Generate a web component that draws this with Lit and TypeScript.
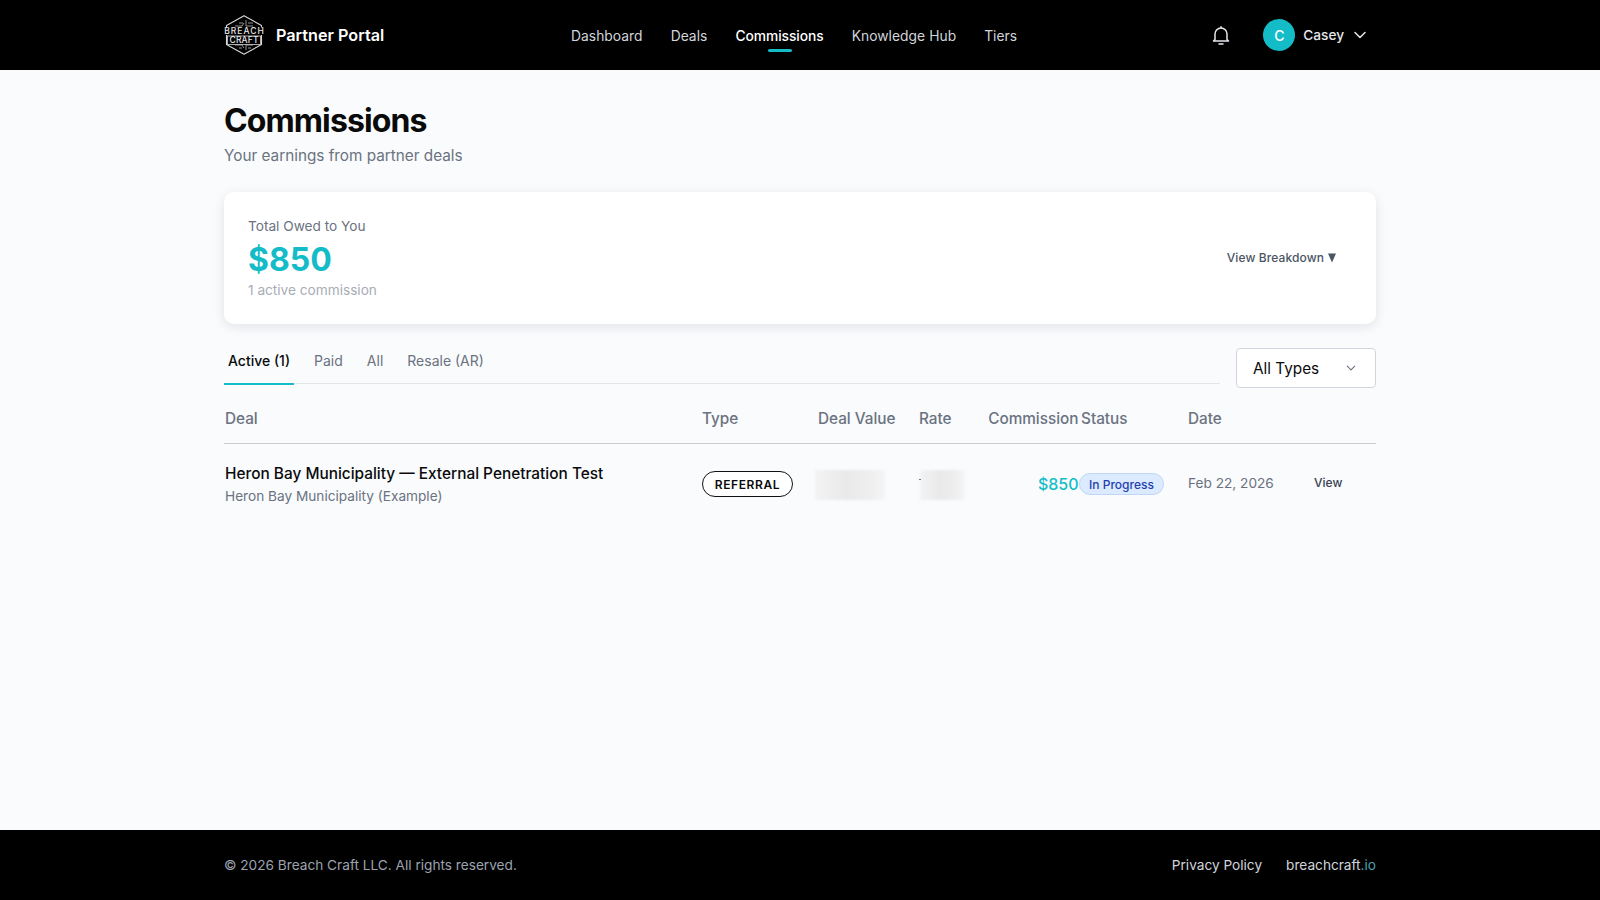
import { LitElement, html, css, svg } from "lit";
import { customElement } from "lit/decorators.js";

const logo = svg`<svg class="logo" viewBox="0 0 40 40" width="40" height="40" fill="none" aria-label="Breach Craft">
  <path d="M20 .8 L37.500 10.500 V29.500 L20 39.200 L2.500 29.500 V10.500 Z" stroke="#d8d8d8" stroke-width="1.100" stroke-linejoin="round"/>
  <path d="M11 11 H18 L20 8 M29 11 H22 V5 M15 8 H19 M24 8 H29 M11 30 H18 L20 33 M29 30 H22 V35 M15 33 H18 M24 33 H27" stroke="#b8b8b8" stroke-width=".8"/>
  <rect x="0" y="12.500" width="40" height="7.500" fill="#000"/>
  <rect x="3.500" y="21" width="33" height="8.500" fill="#000" stroke="#d8d8d8" stroke-width=".8"/>
  <text x="20" y="19.200" text-anchor="middle" textLength="39.500" lengthAdjust="spacing" class="lt">BREACH</text>
  <text x="20" y="28.200" text-anchor="middle" textLength="29" lengthAdjust="spacing" class="lt">CRAFT</text>
</svg>`;

const bell = svg`<svg viewBox="0 0 24 24" width="24" height="24" fill="none" stroke="#e5e7eb" stroke-width="1.500" stroke-linecap="round" stroke-linejoin="round"><path d="M18 16.500V11a6 6 0 0 0-12 0v5.500L4.500 18h15z"/><path d="M10 21h4"/><path d="M12 5V3.800"/></svg>`;

const chevron = (c: string, w: number) => svg`<svg viewBox="0 0 16 16" width="${w}" height="${w}" fill="none" stroke="${c}" stroke-width="1.500" stroke-linecap="round" stroke-linejoin="round"><path d="M3 5.500 8 10.500 13 5.500"/></svg>`;

const tri = svg`<svg class="tri" viewBox="0 0 8 10" width="8" height="10"><path d="M0 .5H8L4 9.500Z" fill="#4b5563"/></svg>`;

@customElement("app-root")
export class AppRoot extends LitElement {
  static styles = css`
    :host { display: flex; flex-direction: column; min-height: 900px; background: #f9fbfd; font-family: Inter, "Liberation Sans", sans-serif; color: #0a0a0a; }
    * { box-sizing: border-box; }
    .bar { background: #000; height: 70px; flex: none; }
    .wrap { width: 1152px; margin: 0 auto; }
    .bar .wrap { height: 100%; display: flex; align-items: center; }
    .brand { display: flex; align-items: center; gap: 12px; width: 347px; flex: none; color: #fff; font-size: 16.200px; font-weight: 600; }
    .logo { display: block; }
    .lt { font-family: Inter, sans-serif; font-size: 8.500px; font-weight: 500; fill: #e6e6e6; }
    nav { display: flex; gap: 28px; font-size: 13.800px; letter-spacing: .05px; color: #d1d5db; flex: 1; align-self: stretch; padding-top: 1px; }
    nav a { position: relative; display: flex; align-items: center; height: 100%; }
    nav a.on { color: #fff; font-weight: 500; letter-spacing: -.05px; }
    nav a.on::after { content: ""; position: absolute; left: 50%; bottom: 18px; width: 24px; height: 3px; margin-left: -12px; border-radius: 2px; background: #14bcc8; }
    .user { display: flex; align-items: center; padding-right: 8px; color: #e5e7eb; font-size: 13.650px; font-weight: 500; }
    .user svg { display: block; }
    .avatar { width: 32px; height: 32px; border-radius: 50%; background: #14bcc8; color: #fff; display: flex; align-items: center; justify-content: center; margin: 0 8px 0 30px; font-size: 14px; }
    .caret { margin-left: 8px; }
    main { flex: 1; }
    h1 { margin: 0; padding-top: 33px; font-size: 32px; line-height: 36px; font-weight: 700; letter-spacing: -0.9px; }
    .sub { margin: 5px 0 0; font-size: 15.300px; line-height: 24px; color: #6b7280; }
    .card { margin-top: 24px; height: 132px; background: #fff; border-radius: 10px; box-shadow: 0 3px 12px rgba(15, 23, 42, .1); padding: 0 40px 0 24px; display: flex; align-items: center; justify-content: space-between; }
    .lab { font-size: 13.650px; line-height: 20px; color: #6b7280; }
    .big { font-size: 32px; line-height: 40px; font-weight: 700; color: #14bcc8; margin-top: 4px; }
    .note { font-size: 13.650px; line-height: 20px; color: #a8adb5; }
    .brk { display: flex; align-items: center; gap: 4px; font-size: 12px; letter-spacing: .1px; font-weight: 500; color: #4b5563; padding-bottom: 1px; }
    .tri { display: block; }
    .tabsrow { display: flex; align-items: flex-start; gap: 16px; margin-top: 24px; }
    .tabs { flex: 1; height: 36px; display: flex; gap: 16px; border-bottom: 1px solid #e2e5e9; font-size: 14px; color: #6b7280; }
    .tabs span { height: 36px; padding: 2px 4px 0; line-height: 20px; margin-top: 1px; }
    .tabs .on { color: #0a0a0a; font-weight: 500; border-bottom: 2px solid #14bcc8; }
    .select { width: 140px; height: 40px; flex: none; background: #fff; border: 1px solid #d1d5db; border-radius: 4px; display: flex; align-items: center; justify-content: space-between; padding: 0 18px 0 16px; font-size: 15.300px; }
    table { width: 100%; table-layout: fixed; border-collapse: collapse; margin-top: 1px; }
    th { height: 54px; padding: 6px 0 0; font-size: 15.300px; font-weight: 500; color: #6b7280; text-align: left; border-bottom: 1px solid #c9cdd2; }
    td { height: 84px; padding: 0; font-size: 13.650px; vertical-align: middle; }
    th.d { padding-left: 1px; }
    td.d { padding-left: 1px; padding-bottom: 2px; }
    .dn { font-size: 15.400px; line-height: 24px; font-weight: 500; margin-top: -1px; }
    .dc { font-size: 13.650px; line-height: 20px; color: #6b7280; }
    .tp { padding-bottom: 2px; }
    .pill { display: inline-flex; align-items: center; justify-content: center; width: 91px; height: 26px; border: 1px solid #111; border-radius: 13px; background: #fff; font-size: 12px; font-weight: 600; letter-spacing: .6px; }
    .blurcell { position: relative; display: block; }
    .blur { display: block; height: 30px; background: linear-gradient(90deg, #f3f3f3, #e9e9e9 45%, #efefef 80%, #f5f5f5); filter: blur(1px); }
    .b1 { width: 70px; margin-left: -3px; }
    .b2 { width: 45px; margin-left: 1px; }
    .speck { position: absolute; left: 0; top: 9px; width: 2px; height: 1px; background: #777; }
    .r { text-align: right; padding-right: 2.500px; }
    td.r { padding-bottom: 3px; }
    .amt { font-size: 16px; color: #14bcc8; font-weight: 500; }
    .stc { padding-bottom: 2px; }
    .st { display: inline-flex; align-items: center; height: 22px; padding: 0 9px; border-radius: 11px; margin-left: -2px; background: #dbeafe; border: 1px solid #bfd7f5; color: #1e40af; font-size: 12px; font-weight: 500; }
    .dt { color: #6b7280; padding-bottom: 4px; }
    .vw { font-size: 12px; font-weight: 500; color: #374151; padding-bottom: 5px; }
    footer .wrap { justify-content: space-between; font-size: 13.650px; color: #9ca3af; }
    .links { display: flex; gap: 24px; color: #d1d5db; }
    .links i { font-style: normal; color: #4d9fb0; }
  `;

  render() {
    return html`
      <header class="bar"><div class="wrap">
        <div class="brand">${logo}<span>Partner Portal</span></div>
        <nav>
          <a>Dashboard</a><a>Deals</a><a class="on">Commissions</a><a>Knowledge Hub</a><a>Tiers</a>
        </nav>
        <div class="user">
          ${bell}
          <span class="avatar">C</span>
          <span>Casey</span>
          <span class="caret">${chevron("#e5e7eb", 16)}</span>
        </div>
      </div></header>
      <main><div class="wrap">
        <h1>Commissions</h1>
        <p class="sub">Your earnings from partner deals</p>
        <section class="card">
          <div>
            <div class="lab">Total Owed to You</div>
            <div class="big">$850</div>
            <div class="note">1 active commission</div>
          </div>
          <div class="brk"><span>View Breakdown</span>${tri}</div>
        </section>
        <div class="tabsrow">
          <div class="tabs"><span class="on">Active (1)</span><span>Paid</span><span>All</span><span>Resale (AR)</span></div>
          <div class="select"><span>All Types</span>${chevron("#6b7280", 12)}</div>
        </div>
        <table>
          <colgroup><col style="width:478px"/><col style="width:116px"/><col style="width:101px"/><col style="width:68px"/><col style="width:94px"/><col style="width:107px"/><col style="width:126px"/><col/></colgroup>
          <thead><tr><th class="d">Deal</th><th>Type</th><th>Deal Value</th><th>Rate</th><th class="r">Commission</th><th>Status</th><th>Date</th><th></th></tr></thead>
          <tbody><tr>
            <td class="d"><div class="dn">Heron Bay Municipality — External Penetration Test</div><div class="dc">Heron Bay Municipality (Example)</div></td>
            <td class="tp"><span class="pill">REFERRAL</span></td>
            <td><span class="blur b1"></span></td>
            <td><span class="blurcell"><span class="blur b2"></span><span class="speck"></span></span></td>
            <td class="r"><span class="amt">$850</span></td>
            <td class="stc"><span class="st">In Progress</span></td>
            <td class="dt">Feb 22, 2026</td>
            <td class="vw">View</td>
          </tr></tbody>
        </table>
      </div></main>
      <footer class="bar"><div class="wrap">
        <span>© 2026 Breach Craft LLC. All rights reserved.</span>
        <div class="links"><span>Privacy Policy</span><span>breachcraft<i>.io</i></span></div>
      </div></footer>
    `;
  }
}
